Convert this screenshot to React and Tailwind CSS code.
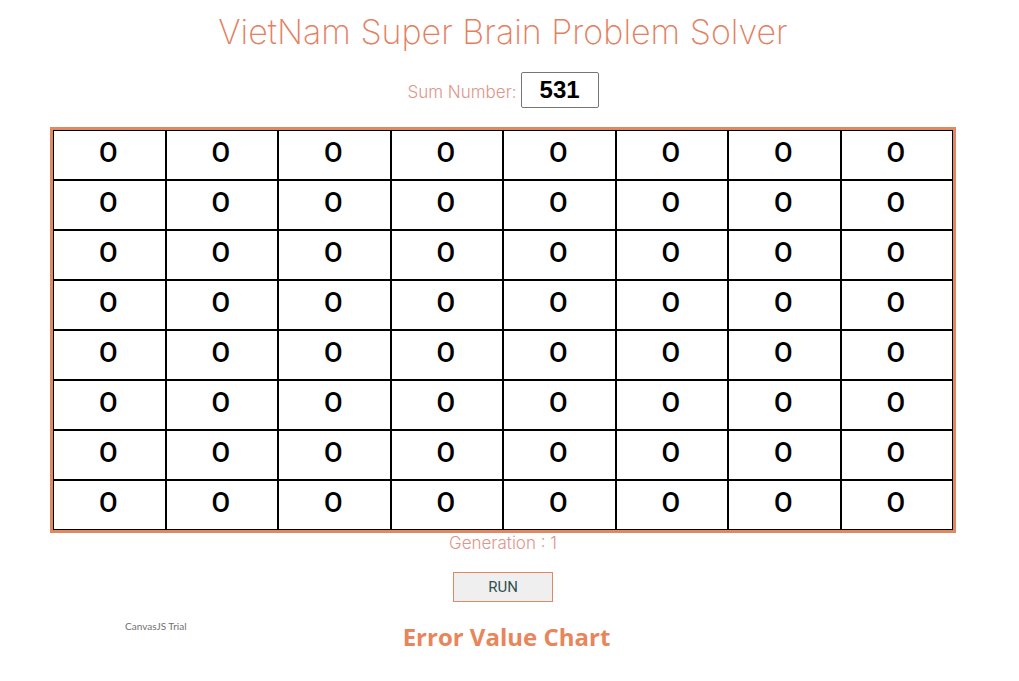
const SIZE = 8;
const board = Array.from({ length: SIZE }, () => Array(SIZE).fill("O"));

function Board({ rows }) {
  return (
    <table className="w-full table-fixed border-separate border-spacing-0 border-3 border-[#e08860]">
      <tbody>
        {rows.map((row, r) => (
          <tr key={r}>
            {row.map((value, c) => (
              <td
                key={c}
                className="h-[50px] border border-black p-0 pr-[2px] pb-1 text-center font-['Roboto',sans-serif] text-[27px] leading-8 font-medium text-black"
              >
                {value}
              </td>
            ))}
          </tr>
        ))}
      </tbody>
    </table>
  );
}

export default function App() {
  return (
    <main className="flex flex-col items-center bg-white pr-[63px] pl-[50px] font-['Inter',sans-serif]">
      <h1 className="mt-3 text-center text-[34px] leading-10 font-extralight text-[#e4805f]">
        VietNam Super Brain Problem Solver
      </h1>
      <div className="mt-5 flex items-center gap-1">
        <label htmlFor="sum" className="mt-1 text-[17px] leading-6 font-light text-[#e0958a]">
          Sum Number:
        </label>
        <input
          id="sum"
          type="text"
          defaultValue="531"
          className="h-9 w-[78px] rounded-xs border border-[#767676] text-center font-['Liberation_Sans',sans-serif] text-2xl font-bold text-black"
        />
      </div>
      <div className="mt-[19px] w-full">
        <Board rows={board} />
      </div>
      <p className="text-[17px] leading-5 font-light text-[#e0958a]">Generation : 1</p>
      <button
        type="button"
        className="mt-[19px] h-[30px] w-[100px] border border-[#e08860] bg-[#efefef] pb-px font-['Roboto',sans-serif] text-[15px] leading-6 text-[#2f4f4f]"
      >
        RUN
      </button>
      <section className="grid w-full grid-cols-[1fr_auto_1fr] items-start pt-4 pl-[7px]">
        <a
          href="https://canvasjs.com/"
          className="pl-[68px] font-['Lato',sans-serif] text-[10px] leading-4 text-[#707070]"
        >
          CanvasJS Trial
        </a>
        <h2 className="font-['Open_Sans',sans-serif] text-2xl leading-[38px] font-bold text-[#e8855b]">
          Error Value Chart
        </h2>
      </section>
    </main>
  );
}
